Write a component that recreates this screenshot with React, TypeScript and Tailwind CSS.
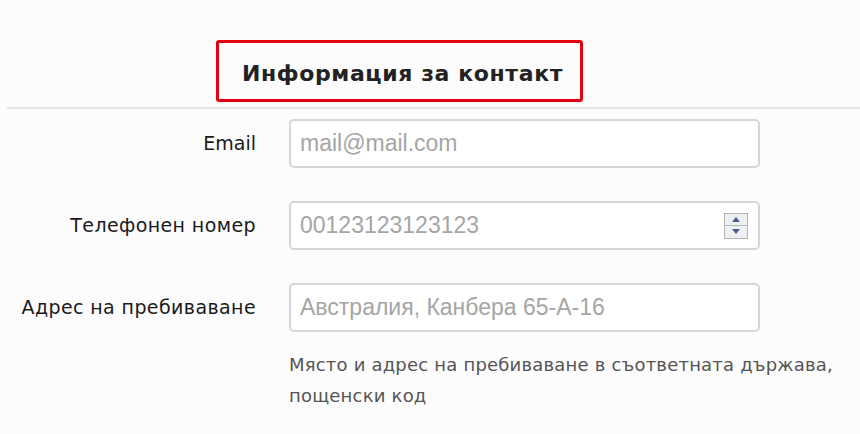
import React from "react";

function Spinner() {
  return (
    <div className="flex flex-col w-[24px] h-[26px] border border-[#b5b5b5] bg-[#eef0f4]">
      <div className="flex-1 flex items-center justify-center border-b border-[#b5b5b5]">
        <svg width="8" height="5" viewBox="0 0 8 5"><path d="M0 5 L4 0 L8 5 Z" fill="#4a5a8a" /></svg>
      </div>
      <div className="flex-1 flex items-center justify-center">
        <svg width="8" height="5" viewBox="0 0 8 5"><path d="M0 0 L4 5 L8 0 Z" fill="#4a5a8a" /></svg>
      </div>
    </div>
  );
}

function Row({ label, placeholder, spinner, tracking }: { label: string; placeholder: string; spinner?: boolean; tracking: string }) {
  return (
    <div className="flex items-center">
      <div
        className={`w-[257px] pr-[1px] text-right text-[19px] text-[#1a1a1a] ${tracking}`}
        style={{ fontFamily: '"DejaVu Sans", Verdana, sans-serif' }}
      >
        {label}
      </div>
      <div className="ml-[32px] w-[471px] h-[49px] rounded-[5px] border-2 border-[#d6d6d6] bg-white flex items-center pl-[9px] pr-[10px]">
        <span className="flex-1 text-[23px] text-[#a5a5a5]" style={{ fontFamily: '"Liberation Sans", Arial, sans-serif' }}>
          {placeholder}
        </span>
        {spinner && <Spinner />}
      </div>
    </div>
  );
}

export default function App() {
  return (
    <div className="w-[860px] h-[434px] bg-[#fcfcfc] overflow-hidden">
      <div className="h-[40px]" />
      <div className="ml-[216px] w-[367px] h-[62px] border-[3px] border-[#e3000f] rounded-[3px] flex items-end pb-[9px] pl-[23px]">
        <span className="text-[22px] font-bold text-[#222] tracking-[0.6px]" style={{ fontFamily: '"DejaVu Sans", Verdana, sans-serif' }}>
          Информация за контакт
        </span>
      </div>
      <div className="ml-[7px] mt-[5px] h-[2px] bg-[#e6e6e6]" />
      <div className="mt-[10px] flex flex-col gap-[33px]">
        <Row label="Email" placeholder="mail@mail.com" tracking="tracking-[0px]" />
        <Row label="Телефонен номер" placeholder="00123123123123" spinner tracking="tracking-[0.4px]" />
        <Row label="Адрес на пребиваване" placeholder="Австралия, Канбера 65-А-16" tracking="tracking-[0.4px]" />
      </div>
      <div className="ml-[289px] mt-[17px] text-[18px] leading-[31px] text-[#555] tracking-[0.2px]" style={{ fontFamily: '"DejaVu Sans", Verdana, sans-serif' }}>
        Място и адрес на пребиваване в съответната държава,
        <br />
        пощенски код
      </div>
    </div>
  );
}
